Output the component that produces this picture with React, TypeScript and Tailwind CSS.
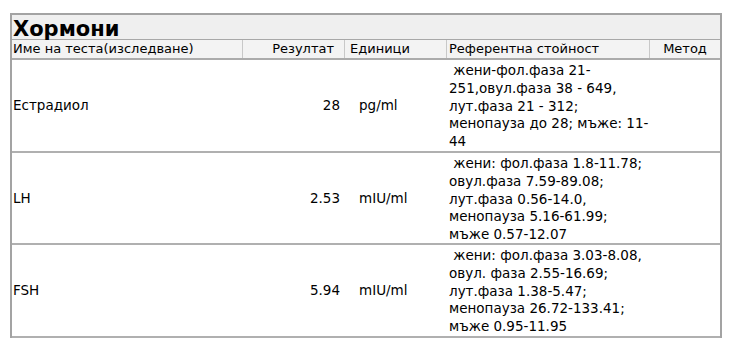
const ROWS = [
  {
    name: "Естрадиол",
    result: "28",
    unit: "pg/ml",
    height: "h-[93px]",
    ref: [" жени-фол.фаза 21-", "251,овул.фаза 38 - 649,", "лут.фаза 21 - 312;", "менопауза до 28; мъже: 11-", "44"],
  },
  {
    name: "LH",
    result: "2.53",
    unit: "mIU/ml",
    height: "h-[92px]",
    ref: [" жени: фол.фаза 1.8-11.78;", "овул.фаза 7.59-89.08;", "лут.фаза 0.56-14.0,", "менопауза 5.16-61.99;", "мъже 0.57-12.07"],
  },
  {
    name: "FSH",
    result: "5.94",
    unit: "mIU/ml",
    height: "h-[93px]",
    ref: [" жени: фол.фаза 3.03-8.08,", "овул. фаза 2.55-16.69;", "лут.фаза 1.38-5.47;", "менопауза 26.72-133.41;", "мъже 0.95-11.95"],
  },
];

export default function App() {
  return (
    <div className="w-[734px] h-[340px] overflow-hidden bg-white pt-[13px] pl-[10px] font-['DejaVu_Sans',Verdana,sans-serif] text-[13px] text-black">
      <div className="w-[712px] border-l-2 border-t-2 border-r-2 border-[#a3a3a3]">
        <div className="h-[25px] bg-[#efefef] border-b border-[#a8a8a8] pl-px text-[21px] font-bold leading-[29px]">
          Хормони
        </div>
        <div className="grid grid-cols-[231px_102px_102px_203px_70px] h-[20px] bg-[#f3f3f3] border-b-2 border-[#ababab] leading-[18px]">
          <div className="pl-px border-r border-[#c8c8c8] whitespace-nowrap">Име на теста(изследване)</div>
          <div className="pr-[10px] text-right border-r border-[#c8c8c8]">Резултат</div>
          <div className="pl-[5px] border-r border-[#c8c8c8]">Единици</div>
          <div className="pl-[2px] border-r border-[#c8c8c8] whitespace-nowrap">Референтна стойност</div>
          <div className="text-center">Метод</div>
        </div>
        {ROWS.map((r) => (
          <div
            key={r.name}
            className={`grid grid-cols-[231px_102px_102px_203px_70px] ${r.height} border-b-2 border-[#b0b0b0] text-[13.5px]`}
          >
            <div className="flex items-center pl-px">{r.name}</div>
            <div className="flex items-center justify-end pr-[5px]">{r.result}</div>
            <div className="flex items-center pl-[14px]">{r.unit}</div>
            <div className="pl-[2px] pt-[2px] leading-[17.8px] whitespace-pre">
              {r.ref.map((line, i) => (
                <div key={i}>{line}</div>
              ))}
            </div>
            <div />
          </div>
        ))}
      </div>
    </div>
  );
}
